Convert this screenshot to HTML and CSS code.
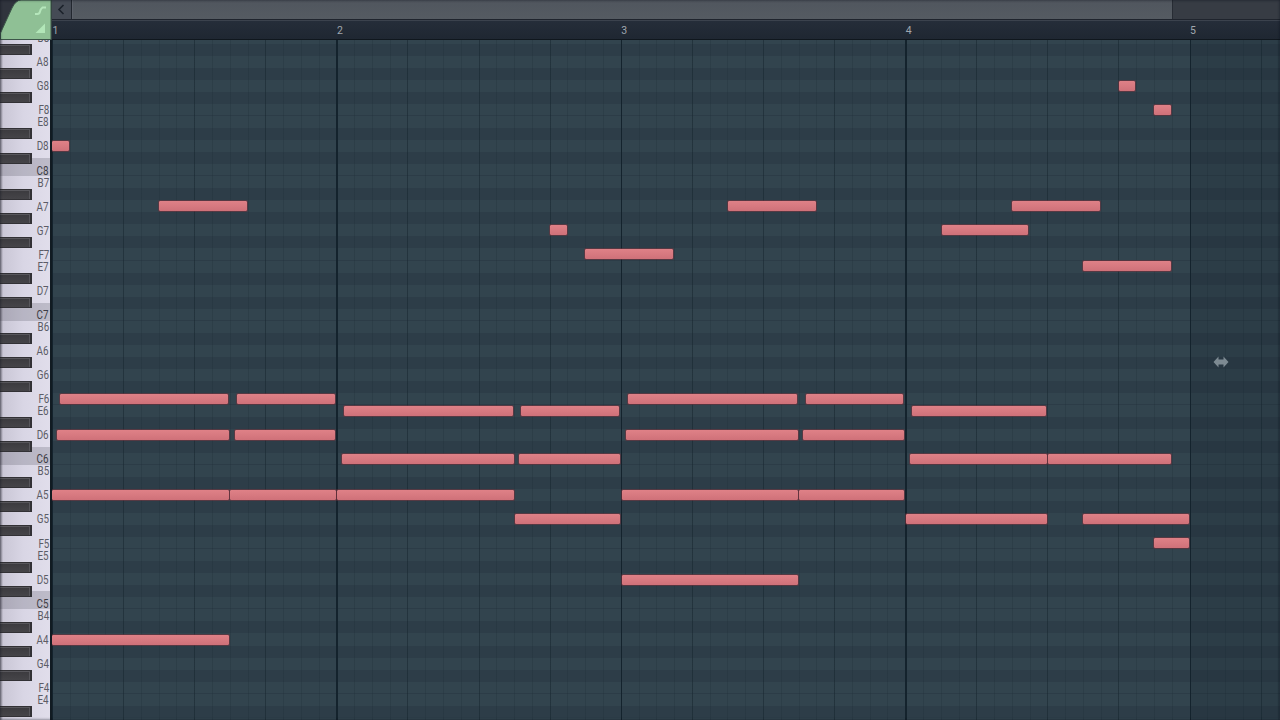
FILE: index.html
```html
<!DOCTYPE html>
<html lang="en">
<head>
    <meta charset="UTF-8">
    <title>Piano roll</title>
    <link rel="stylesheet" href="styles.css">
</head>
<body>
    <div class="roll">
        <div class="corner">
            <svg width="52" height="40" viewBox="0 0 52 40">
                <path class="tab" d="M0.5 39.5V33L12 8Q16 0 21 0H51V39.5Z"/>
                <path class="curve" d="M35 14H37.5Q39.5 14 40 11.5T42.5 7.5H46"/>
                <path class="ramp" d="M35.5 33L45 23.5V33Z"/>
            </svg>
        </div>
        <div class="top">
            <div class="scrollbar">
                <div class="arrow">
                    <svg width="20" height="19" viewBox="0 0 20 19"><path d="M11.5 5L7 9.5L11.5 14"/></svg>
                </div>
                <div class="thumb"></div>
            </div>
            <div class="ruler">
                <span>1</span><span>2</span><span>3</span><span>4</span><span>5</span>
            </div>
        </div>
        <div class="keyboard"><div class="keys" id="keys"></div></div>
        <div class="grid">
            <div class="rows" id="rows"></div>
            <div class="lines"></div>
            <div class="after"></div>
            <div id="notes"></div>
            <svg class="cursor" width="16" height="12" viewBox="0 0 16 12"><path d="M0.5 6L5.5 0.5V3.5H10.5V0.5L15.5 6L10.5 11.5V8.5H5.5V11.5Z"/></svg>
        </div>
    </div>
    <script src="roll.js"></script>
</body>
</html>
```
FILE: styles.css
```css
body {
    margin: 0;
    background: #2d3d47;
    font-family: Roboto, "Liberation Sans", sans-serif;
    overflow: hidden;
}

.roll {
    position: relative;
    display: grid;
    grid-template-columns: 52px 1228px;
    grid-template-rows: 40px 680px;
    width: 1280px;
    height: 720px;
    overflow: hidden;
}

/* dark edge around the window */
.roll::after {
    content: "";
    position: absolute;
    inset: 0;
    box-shadow: inset 0 0 3px rgba(10, 15, 25, 0.7);
    pointer-events: none;
}

svg {
    display: block;
}

.corner {
    background: #30343d;
}

.tab {
    fill: #8fc095;
    stroke: #3d5649;
}

.curve {
    fill: none;
    stroke: #b5e6bb;
    stroke-width: 2;
}

.ramp {
    fill: #b2e6b8;
}

.scrollbar {
    display: flex;
    height: 19px;
    background: #373c44;
    border-bottom: 1px solid #1f242d;
}

.arrow {
    width: 19px;
    background: #454b55;
    border-right: 1px solid #22272f;
}

.arrow path {
    fill: none;
    stroke: #1c222b;
    stroke-width: 1.6;
}

.thumb {
    width: 1099px;
    background: linear-gradient(#50565e, #555b62);
    border-left: 1px solid #5c616a;
    border-right: 1px solid #272c34;
}

.ruler {
    display: grid;
    grid-template-columns: repeat(5, 284.4px);
    height: 18px;
    border-top: 1px solid #3b424d;
    border-bottom: 1px solid #10171e;
    background: linear-gradient(#252d39, #1f2732);
    overflow: hidden;
}

.ruler span {
    padding-left: 0.5px;
    color: #a0a7ae;
    font-size: 10.5px;
    line-height: 19px;
}

.keyboard {
    box-sizing: border-box;
    background: linear-gradient(90deg, #888591 0, #cac7d6 3px, #d9d6e5 24px, #e1deeb 51px);
    border-right: 2px solid #111b22;
    overflow: hidden;
}

/* the first row starts above the visible area */
.keys,
.rows {
    margin-top: -8.1px;
}

.key {
    position: relative;
    height: 12.045px;
}

.key span {
    position: absolute;
    right: 1px;
    top: 0.3px;
    color: #5c5c66;
    font-size: 12px;
    line-height: 13px;
    transform: scaleX(0.82);
    transform-origin: right;
}

.key.c {
    background: rgba(75, 75, 85, 0.23);
}

.key.c span {
    color: #3c3c44;
}

.key.cs::before {
    content: "";
    position: absolute;
    left: 0;
    right: 0;
    top: 6px;
    bottom: 0;
    background: rgba(75, 75, 85, 0.23);
}

.key.black::after {
    content: "";
    position: absolute;
    box-sizing: border-box;
    left: 0;
    top: 0.3px;
    width: 32px;
    height: 11px;
    background: linear-gradient(#3b3a3e, #454448);
    border: 1px solid #323135;
    border-width: 1px 2px 1px 0;
    box-shadow: inset -1px 1px 0 #58575c;
}

.grid {
    position: relative;
    overflow: hidden;
}

.row {
    box-sizing: border-box;
    height: 12.045px;
    background: #32444e;
}

.row.black {
    background: #2d3d48;
}

.row.split {
    border-bottom: 1px solid #2c3c47;
}

.lines,
.after {
    position: absolute;
    inset: 0;
}

/* bars, beats and steps */
.lines {
    background:
        repeating-linear-gradient(90deg, #14232d 0 1.3px, transparent 1.3px 284.4px),
        repeating-linear-gradient(90deg, rgba(20, 35, 44, 0.38) 0 1px, transparent 1px 71.1px),
        repeating-linear-gradient(90deg, rgba(27, 43, 52, 0.24) 0 1px, transparent 1px 17.775px);
}

.after {
    left: 1139px;
    background: rgba(18, 33, 44, 0.2);
}

.note {
    position: absolute;
    box-sizing: border-box;
    height: 12px;
    background: linear-gradient(#df8187, #cf7179);
    background-clip: padding-box;
    border: 1px solid rgba(110, 50, 60, 0.6);
    border-radius: 2px;
}

.cursor {
    position: absolute;
    left: 1160.5px;
    top: 316px;
    fill: #7d8a92;
}
```
FILE: roll.js
```javascript
var names = ['B', 'A#', 'A', 'G#', 'G', 'F#', 'F', 'E', 'D#', 'D', 'C#', 'C'];
var rowHeight = 12.045;
var rowCount = 58;
var keys = '';
var rows = '';

// B8 is the first row, the last one is too low to fit its label
for (var i = 0; i < rowCount; i++) {
    var name = names[i % 12];
    var octave = 8 - Math.floor(i / 12);
    var black = name.length > 1;
    var cls = black ? ' black' : '';
    var label = black || i === rowCount - 1 ? '' : '<span>' + name + octave + '</span>';
    keys += '<div class="key' + cls + (name === 'C' ? ' c' : '') + (name === 'C#' ? ' cs' : '') + '">' + label + '</div>';
    rows += '<div class="row' + cls + (name === 'C' || name === 'F' ? ' split' : '') + '"></div>';
}

// key, start, end
var notes = [
    ['G8', 1066, 1084], ['F8', 1101, 1120], ['D8', -1, 18],
    ['A7', 106, 196], ['A7', 675, 765], ['A7', 959, 1049],
    ['G7', 497, 516], ['G7', 889, 977],
    ['F7', 532, 622], ['E7', 1030, 1120],
    ['F6', 7, 177], ['F6', 184, 284], ['F6', 575, 746], ['F6', 753, 852],
    ['E6', 291, 462], ['E6', 468, 568], ['E6', 859, 995],
    ['D6', 4, 178], ['D6', 182, 284], ['D6', 573, 747], ['D6', 750, 853],
    ['C6', 289, 463], ['C6', 466, 569], ['C6', 857, 996], ['C6', 995, 1120],
    ['A5', -1, 178], ['A5', 177, 285], ['A5', 284, 463], ['A5', 569, 747], ['A5', 746, 853],
    ['G5', 462, 569], ['G5', 853, 996], ['G5', 1030, 1138],
    ['F5', 1101, 1138], ['D5', 569, 747], ['A4', -1, 178]
];

var html = '';
notes.forEach(function (n) {
    var row = (8 - n[0][1]) * 12 + names.indexOf(n[0][0]);
    var top = Math.round(row * rowHeight - 8.4);
    html += '<div class="note" style="left:' + n[1] + 'px;top:' + top + 'px;width:' + (n[2] - n[1]) + 'px"></div>';
});

document.getElementById('keys').innerHTML = keys;
document.getElementById('rows').innerHTML = rows;
document.getElementById('notes').innerHTML = html;
```
